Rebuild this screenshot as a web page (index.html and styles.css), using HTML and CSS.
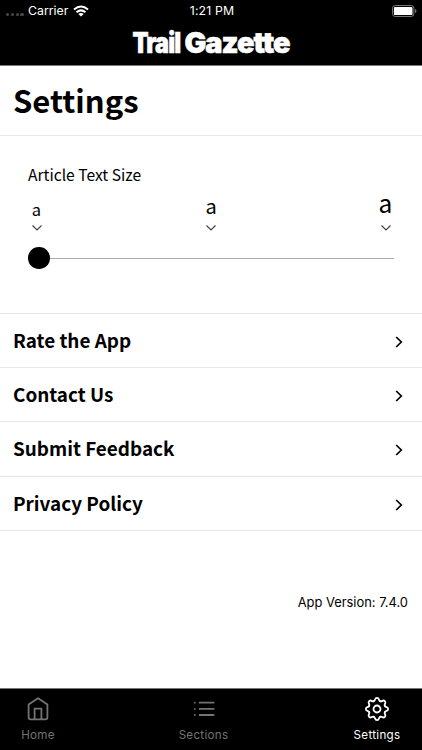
FILE: index.html
```html
<!DOCTYPE html>
<html lang="en">
<head>
<meta charset="utf-8">
<title>Settings</title>
<link rel="stylesheet" href="styles.css">
</head>
<body>
<div class="app">
  <header class="top">
    <div class="status">
      <div class="carrier">
        <span class="dots"><i></i><i></i><i></i><i></i></span>
        <span class="carrier-name">Carrier</span>
        <svg class="wifi" viewBox="0 0 16 12"><path fill="none" stroke="#fff" stroke-width="2" d="M1 4.5Q8-1.6 15 4.5M3.5 7.3Q8 3.5 12.5 7.3"/><path fill="#fff" d="M5.3 8.9Q8 6.9 10.7 8.9L8 11.6Z"/></svg>
      </div>
      <span class="time">1:21 PM</span>
      <svg class="battery" viewBox="0 0 26 12"><rect x=".5" y=".5" width="21.4" height="11" rx="2.8" fill="none" stroke="#777"/><rect x="1.9" y="1.9" width="18.6" height="8.2" rx="1.2" fill="#fff"/><path fill="#777" d="M23 4q1.5.5 1.5 2T23 8z"/></svg>
    </div>
    <svg class="logo" viewBox="0 0 166 42"><text x="3.4" y="27.4" textLength="48" lengthAdjust="spacingAndGlyphs">Trail</text><text x="55.5" y="27.4" textLength="105" lengthAdjust="spacingAndGlyphs">Gazette</text></svg>
  </header>
  <main>
    <h1>Settings</h1>
    <section class="size">
      <h2>Article Text Size</h2>
      <div class="steps">
        <div class="step"><span class="small">a</span><svg viewBox="0 0 10 6"><path d="M.5.5 5 5 9.5.5"/></svg></div>
        <div class="step"><span class="medium">a</span><svg viewBox="0 0 10 6"><path d="M.5.5 5 5 9.5.5"/></svg></div>
        <div class="step"><span class="large">a</span><svg viewBox="0 0 10 6"><path d="M.5.5 5 5 9.5.5"/></svg></div>
      </div>
      <div class="slider"><span class="thumb"></span><span class="track"></span></div>
    </section>
    <nav class="links">
      <a><span>Rate the App</span><svg viewBox="0 0 8 12"><path d="M1.2 1 6.3 6 1.2 11"/></svg></a>
      <a><span>Contact Us</span><svg viewBox="0 0 8 12"><path d="M1.2 1 6.3 6 1.2 11"/></svg></a>
      <a><span>Submit Feedback</span><svg viewBox="0 0 8 12"><path d="M1.2 1 6.3 6 1.2 11"/></svg></a>
      <a><span>Privacy Policy</span><svg viewBox="0 0 8 12"><path d="M1.2 1 6.3 6 1.2 11"/></svg></a>
    </nav>
    <p class="version">App Version: 7.4.0</p>
  </main>
  <footer class="tabs">
    <div class="tab home">
      <svg viewBox="-13 -13 26 26"><path d="M-9.4-4.4 0-10.8 9.4-4.4V8.3Q9.4 10.4 7.3 10.4H-7.3Q-9.4 10.4-9.4 8.3ZM-3.4 10.4V-.4H3.4V10.4"/></svg>
      <span>Home</span>
    </div>
    <div class="tab sections">
      <svg viewBox="-13 -13 26 26"><path d="M-4.4-6.3H9.6M-4.4-.1H9.6M-4.4 6H9.6M-9.2-6.3h.01M-9.2-.1h.01M-9.2 6h.01"/></svg>
      <span>Sections</span>
    </div>
    <div class="tab settings">
      <svg viewBox="-13 -13 26 26">
        <defs><path id="tooth" d="M-3.2-7.8C-2.3-8.2-2.1-8.8-1.9-9.6Q-1.5-11.1 0-11.1T1.9-9.6C2.1-8.8 2.3-8.2 3.2-7.8"/></defs>
        <use href="#tooth"/><use href="#tooth" transform="rotate(45)"/><use href="#tooth" transform="rotate(90)"/><use href="#tooth" transform="rotate(135)"/><use href="#tooth" transform="rotate(180)"/><use href="#tooth" transform="rotate(225)"/><use href="#tooth" transform="rotate(270)"/><use href="#tooth" transform="rotate(315)"/>
        <circle r="3.5"/>
      </svg>
      <span>Settings</span>
    </div>
  </footer>
</div>
</body>
</html>
```
FILE: styles.css
```css
* { box-sizing: border-box; margin: 0; padding: 0; }
body { background: #fff; color: #000; font-family: "Noto Sans CJK SC", "Noto Sans", sans-serif; }
.app { width: 422px; height: 750px; display: flex; flex-direction: column; overflow: hidden; }
svg { display: block; fill: none; }
.top { height: 66px; background: #000; color: #fff; border-bottom: 1px solid #777; }
.status { height: 20px; display: grid; grid-template-columns: 1fr auto 1fr; align-items: center; padding: 0 4px 0 6px; font: 12.3px/20px Inter, sans-serif; }
.carrier { display: flex; align-items: center; }
.carrier-name, .time { padding-top: 1px; }
.time { letter-spacing: .15px; }
.dots { display: flex; gap: 1.6px; width: 22px; padding-top: 8px; }
.dots i { width: 3.2px; height: 3.2px; border-radius: 50%; background: #484848; }
.wifi { width: 16px; height: 12px; margin-left: 5px; }
.battery { width: 26px; height: 12px; justify-self: end; }
.logo { width: 166px; height: 42px; margin: 6px 0 0 129px; overflow: visible; }
.logo text { font: 900 28.5px Inter, sans-serif; fill: #fff; stroke: #fff; stroke-width: .6; letter-spacing: -1px; }
main { flex: 1; }
h1 { height: 70px; padding-left: 13px; border-bottom: 1px solid #e6e6e6; font-size: 31px; line-height: 68px; font-weight: 700; }
.size { height: 178px; padding: 26px 28px 0; border-bottom: 1px solid #e6e6e6; }
h2 { font-size: 15.6px; line-height: 24px; font-weight: 400; }
.steps { display: flex; justify-content: space-between; padding: 0 3px; margin-top: 4px; }
.step { width: 11px; display: flex; flex-direction: column; align-items: center; }
.step span { height: 35px; line-height: 34px; }
.step svg { width: 10px; height: 6px; stroke: #444; stroke-width: 1.2; }
.step .small { font-size: 16.5px; line-height: 39px; }
.step .medium { font-size: 20px; line-height: 32px; }
.step .large { font-size: 24.5px; line-height: 25px; }
.slider { display: flex; align-items: center; margin-top: 16px; height: 22px; }
.thumb { width: 21.5px; height: 21.5px; border-radius: 50%; background: #000; }
.track { height: 1px; flex: 1; background: #aaa; }
.links a { display: flex; align-items: center; justify-content: space-between; height: 54.2px; padding: 0 19px 0 13px; border-bottom: 1px solid #e6e6e6; font-size: 18.9px; font-weight: 700; }
.links span { padding-bottom: 2px; }
.links svg { width: 8px; height: 12px; stroke: #000; stroke-width: 1.7; margin-top: 3px; }
.version { margin-top: 62px; padding-right: 14px; text-align: right; font: 12.9px/20px Inter, sans-serif; }
.tabs { height: 62px; background: #000; border-top: 1px solid #777; display: flex; justify-content: space-between; padding: 7px 17px 0 18px; }
.tab { width: 40px; display: flex; flex-direction: column; align-items: center; color: #737373; font: 11.6px/16px Inter, sans-serif; letter-spacing: .3px; }
.tab svg { width: 26px; height: 26px; stroke: currentColor; stroke-width: 1.8; stroke-linecap: round; stroke-linejoin: round; }
.tab span { margin-top: 5px; }
.settings { width: 56px; color: #fff; }
```
